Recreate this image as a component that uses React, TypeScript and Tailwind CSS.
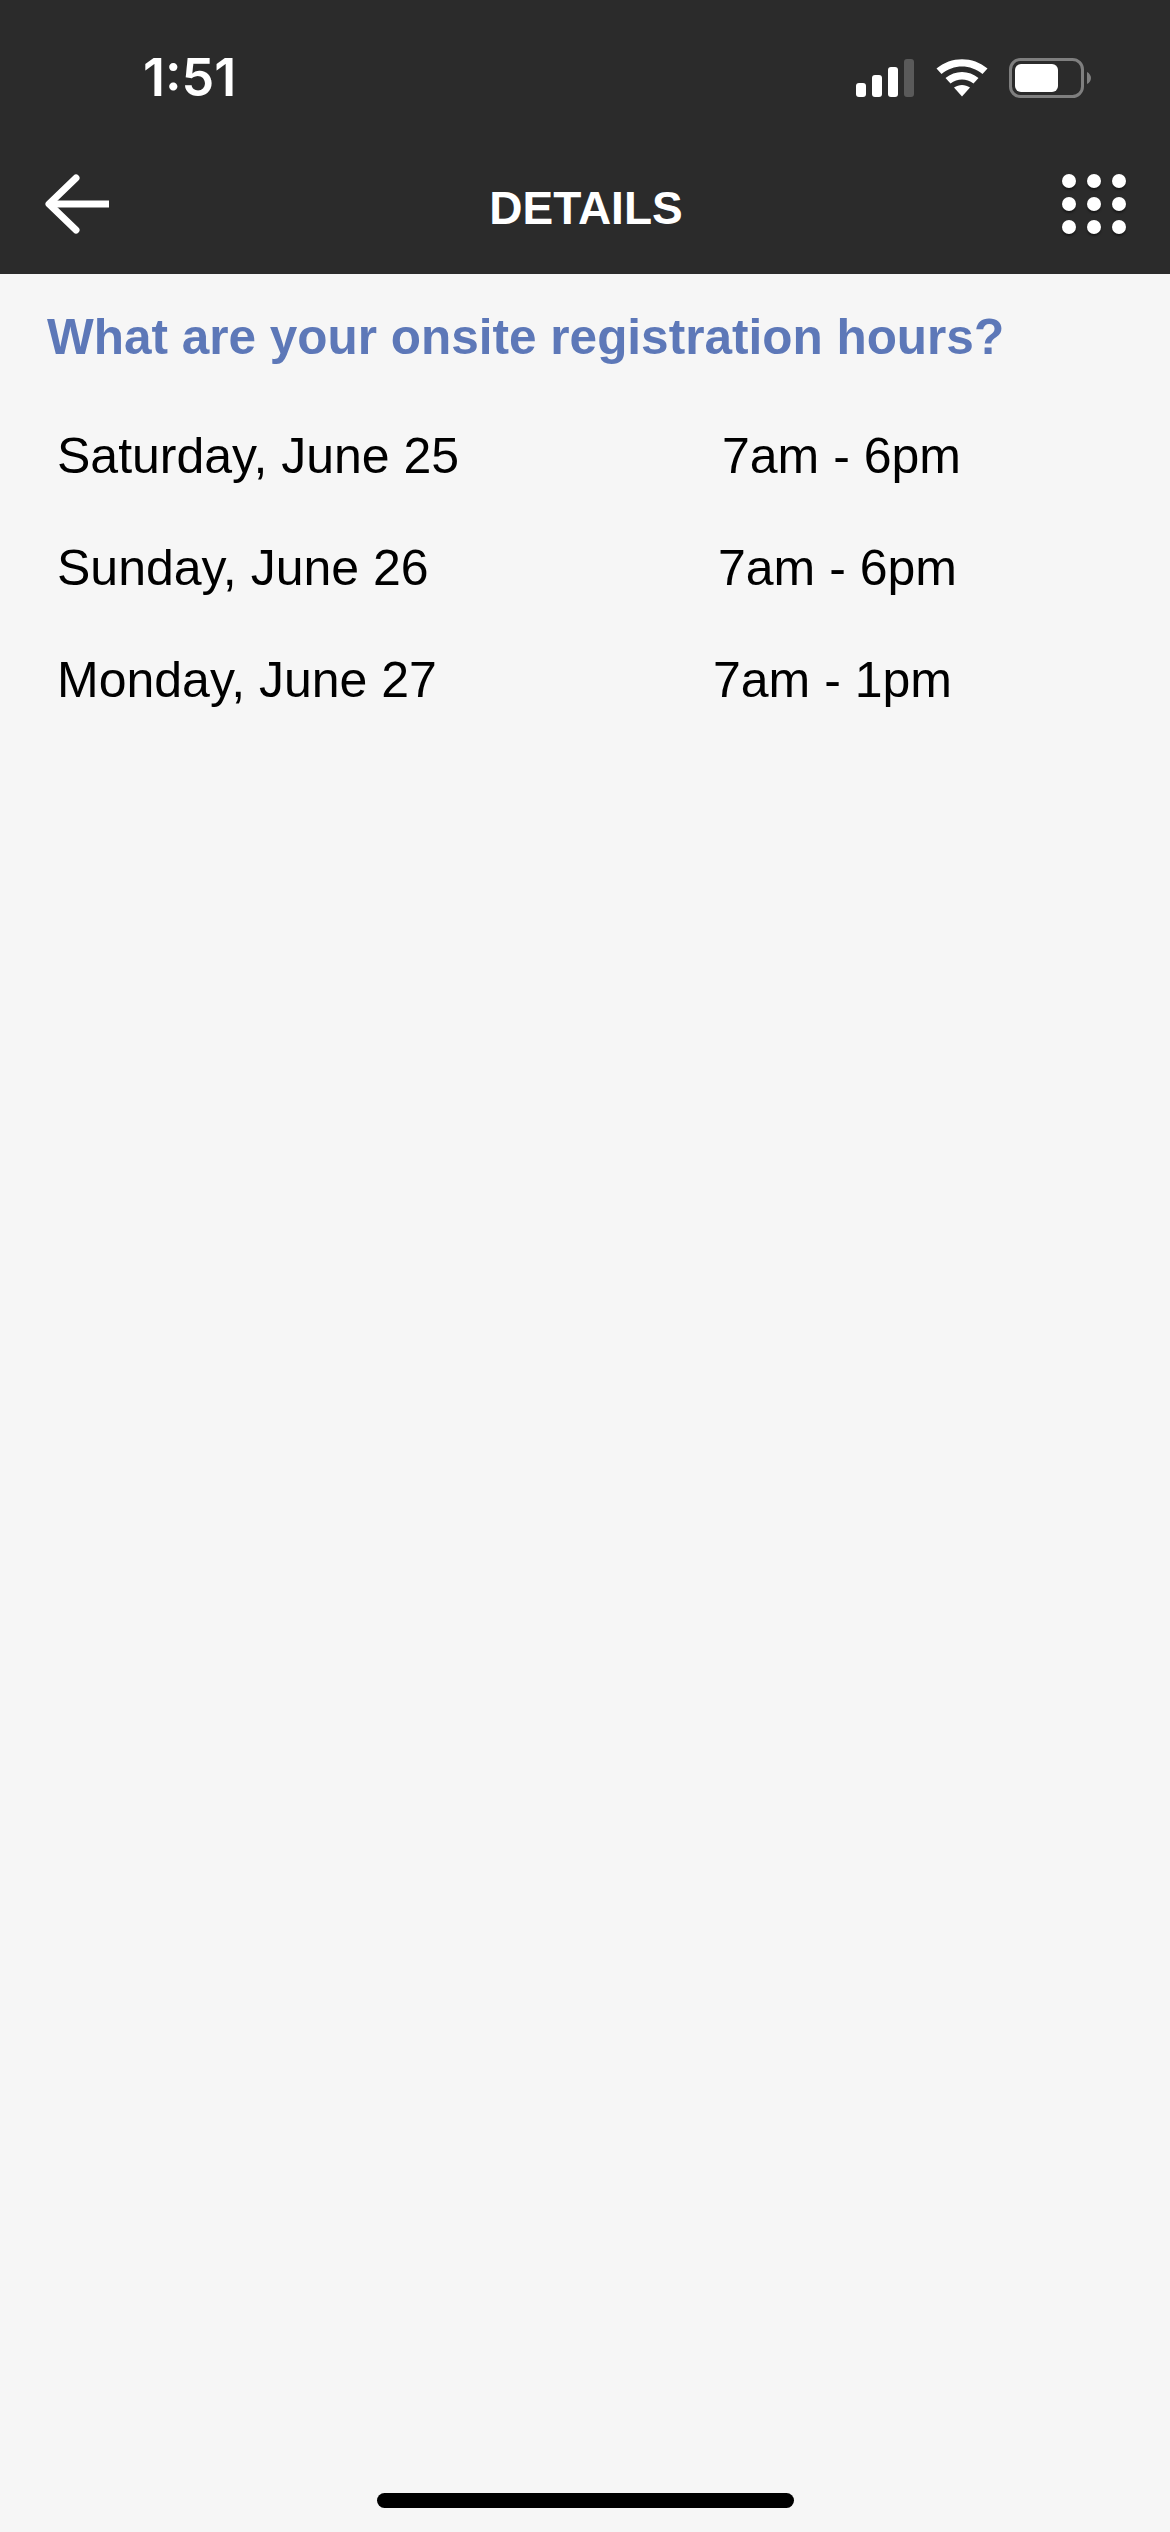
// App.tsx
import React from "react";

const hours = [
	{day: "Saturday, June 25", time: "7am - 6pm", timeClass: "ml-[9px]"},
	{day: "Sunday, June 26", time: "7am - 6pm", timeClass: "ml-[5px]"},
	{day: "Monday, June 27", time: "7am - 1pm", timeClass: "ml-0"},
];

function StatusIcons() {
	return (
		<div className="flex items-center">
			{/* Signal */}
			<svg width="58" height="38" viewBox="0 0 58 38">
				<rect x="0" y="24" width="10" height="14" rx="3" fill="#fff" />
				<rect x="16" y="16" width="10" height="22" rx="3" fill="#fff" />
				<rect x="32" y="8" width="10" height="30" rx="3" fill="#fff" />
				<rect x="48" y="0" width="10" height="38" rx="3" fill="#5a5a5a" />
			</svg>
			{/* Wifi */}
			<svg width="52" height="38" viewBox="0 0 52 38" className="ml-[22px]">
				<path d="M0.500 9.500 C15 -3 37 -3 51.500 9.500 L46.500 15 C34.500 5 17.500 5 5.500 15 Z" fill="#fff" />
				<path d="M9.500 19 C19 11 33 11 42.500 19 L37.500 24.500 C30.500 19 21.500 19 14.500 24.500 Z" fill="#fff" />
				<path d="M18 28.500 C23 25 29 25 34 28.500 L26 37.500 Z" fill="#fff" />
			</svg>
			{/* Battery */}
			<svg width="82" height="40" viewBox="0 0 82 40" className="ml-[21px]">
				<rect x="1.500" y="1.500" width="72" height="37" rx="10" fill="none" stroke="#7f7f7f" strokeWidth="3" />
				<rect x="6" y="6" width="43" height="28" rx="6" fill="#fff" />
				<path d="M78 14 C80.500 15 82 18 82 20 C82 22 80.500 25 78 26 Z" fill="#7f7f7f" />
			</svg>
		</div>
	);
}

function BackArrow() {
	return (
		<svg width="66" height="60" viewBox="0 0 66 60" fill="none" stroke="#fff" strokeWidth="7">
			<path d="M65 30 H6" />
			<path d="M32 4 L5 30 L32 56" strokeLinecap="round" strokeLinejoin="round" />
		</svg>
	);
}

function GridMenu() {
	return (
		<div className="grid grid-cols-3 gap-x-[11px] gap-y-[9px]">
			{Array.from({length: 9}).map((_, i) => (
				<span key={i} className="block h-[14px] w-[14px] rounded-full bg-white shadow-[0_2px_2px_rgba(0,0,0,0.45)]" />
			))}
		</div>
	);
}

export default function App() {
	return (
		<div className="flex min-h-[2532px] w-[1170px] flex-col bg-[#f6f6f6] font-['Liberation_Sans',Arial,sans-serif]">
			{/* Status bar + nav */}
			<header className="h-[274px] bg-[#2b2b2b]">
				<div className="flex h-[156px] items-start justify-between pl-[143px] pr-[79px] pt-[58px]">
					<span className="font-['Inter',sans-serif] text-[52px] font-semibold leading-[40px] text-white">1:51</span>
					<StatusIcons />
				</div>
				<div className="flex h-[96px] items-center pl-[44px] pr-[44px]">
					<BackArrow />
					<span className="flex-1 pt-[8px] text-center text-[46px] font-bold leading-[52px] text-white">DETAILS</span>
					<GridMenu />
				</div>
			</header>

			<main className="flex-1 pl-[47px] pt-[35px]">
				<h1 className="text-[49.500px] font-bold leading-[56px] text-[#5d78b8]">What are your onsite registration hours?</h1>
				<div className="mt-[63px] flex flex-col gap-[56px] pl-[10px]">
					{hours.map((row) => (
						<div key={row.day} className="flex h-[56px] text-[50px] leading-[56px] text-black">
							<span className="w-[656px] shrink-0">{row.day}</span>
							<span className={row.timeClass}>{row.time}</span>
						</div>
					))}
				</div>
			</main>

			{/* Home indicator */}
			<div className="flex justify-center pb-[24px]">
				<div className="h-[15px] w-[417px] rounded-full bg-black" />
			</div>
		</div>
	);
}
